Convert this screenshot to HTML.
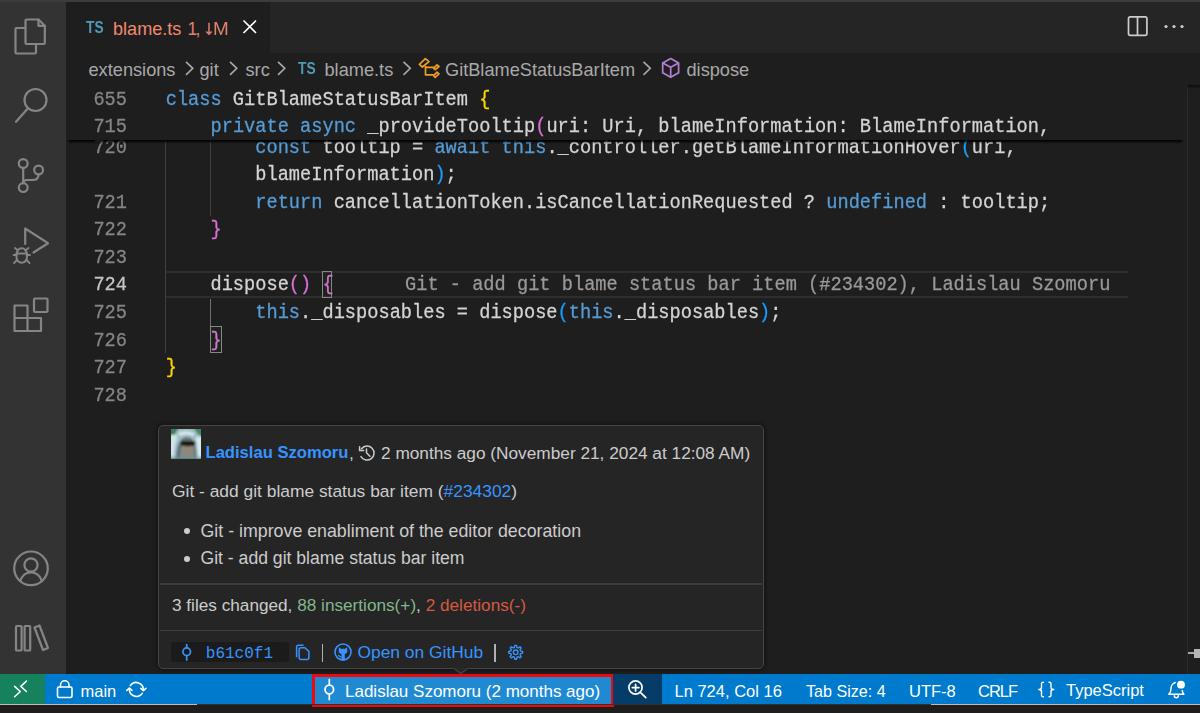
<!DOCTYPE html>
<html><head><meta charset="utf-8">
<style>
*{margin:0;padding:0;box-sizing:border-box}
html,body{width:1200px;height:713px;overflow:hidden;background:#1e1e1e;font-family:"Liberation Sans",sans-serif;position:relative}
.abs{position:absolute}
svg{position:absolute;overflow:visible}
.t{position:absolute;white-space:pre;line-height:1}
#topline{left:0;top:0;width:1200px;height:2px;background:#3c3c3c}
#act{left:0;top:2px;width:66px;height:672px;background:#333333}
#tabs{left:66px;top:2px;width:1134px;height:51px;background:#252526}
#tab{left:66px;top:2px;width:204px;height:51px;background:#1e1e1e}
.code{position:absolute;left:165.7px;font-family:"Liberation Mono",monospace;font-size:18.66px;white-space:pre;color:#d4d4d4;height:27.57px;line-height:27.57px;padding-top:1.7px;transform:scaleY(1.07);transform-origin:0 19.3px;-webkit-text-stroke:0.25px currentColor}
.ln{position:absolute;left:66px;width:61px;text-align:right;font-family:"Liberation Mono",monospace;font-size:18.66px;color:#858585;height:27.57px;line-height:27.57px;padding-top:1.7px;transform:scaleY(1.07);transform-origin:0 19.3px;-webkit-text-stroke:0.25px currentColor}
.k{color:#569cd6}
.b1{color:#ffd700}.b2{color:#da70d6}.b3{color:#179fff}
.guide{position:absolute;width:1.2px;background:#404040}
#status{left:0;top:674px;width:1200px;height:29.8px;background:#007acc}
.st{position:absolute;top:682.8px;color:#fff;font-size:16.5px;white-space:pre;line-height:1}
#tip{left:158px;top:424.8px;width:605.8px;height:244.2px;background:#252526;border:1.5px solid #454545;border-radius:5px;box-shadow:0 0 4px 1px rgba(0,0,0,0.45)}
.tt{position:absolute;color:#cccccc;font-size:17.4px;white-space:pre;line-height:1}
.lnk{color:#3794ff}
.bc{position:absolute;top:60.5px;color:#a9a9a9;font-size:18.2px;white-space:pre;line-height:1}
</style></head><body>
<div id="topline" class="abs"></div>
<div id="act" class="abs"></div>
<div id="tabs" class="abs"></div>
<div id="tab" class="abs"></div>

<!-- activity bar icons -->
<svg width="66" height="672" style="left:0;top:0" fill="none" stroke="#858585" stroke-width="2.2" stroke-linejoin="round" stroke-linecap="round">
  <!-- explorer -->
  <path d="M25.5 27.5 V20.5 a1 1 0 0 1 1 -1 H38.5 L44.8 25.8 V43 a1 1 0 0 1 -1 1 H26.5 a1 1 0 0 1 -1 -1 Z"/>
  <path d="M38.5 19.5 V25.8 H44.8"/>
  <path d="M25.5 28 H16.5 a1 1 0 0 0 -1 1 V52.5 a1 1 0 0 0 1 1 H35 a1 1 0 0 0 1 -1 V44"/>
  <!-- search -->
  <circle cx="35.5" cy="100" r="11"/>
  <path d="M28 108.2 L16 121.8"/>
  <!-- scm -->
  <circle cx="23.2" cy="163.5" r="4.4"/>
  <circle cx="38.6" cy="170" r="4.4"/>
  <circle cx="23.2" cy="187.6" r="4.4"/>
  <path d="M23.2 168 V183.2"/>
  <path d="M38.6 174.4 C38.6 178 36 180 32 180 H27 C25 180 23.2 181 23.2 183"/>
  <!-- run & debug -->
  <path d="M25.2 244 V228.5 L48 243.2 L33.5 252.5"/>
  <path d="M16.5 254.5 a5.2 6.2 0 0 1 10.4 0 v3 a5.2 5.2 0 0 1 -10.4 0 Z" stroke-width="2"/>
  <path d="M18 250.5 L15 248 M25.5 250.5 L28.5 248 M16.5 255 H13.5 M27 255 H30 M17 260 L14 263 M26.5 260 L29.5 263 M16.5 253.5 H27" stroke-width="1.8"/>
  <!-- extensions -->
  <path d="M14.5 305.5 H27.5 V318 H41 V331 H14.5 Z M14.5 318 H27.5 V331"/>
  <rect x="34" y="298.5" width="13.5" height="13.5" rx="1"/>
  <!-- accounts -->
  <circle cx="31" cy="568.3" r="16.8"/>
  <circle cx="31" cy="565" r="6.6"/>
  <path d="M20.3 581 C22 575.5 26 572.5 31 572.5 C36 572.5 40 575.5 41.7 581"/>
  <!-- library -->
  <rect x="16" y="626" width="5.6" height="24.5" rx="0.8"/>
  <rect x="24.6" y="626" width="5.6" height="24.5" rx="0.8"/>
  <path d="M34.5 627.5 L39.5 625.5 L48 648 L43 650 Z"/>
</svg>

<!-- tab -->
<div class="t" style="left:85.5px;top:19.6px;font-size:16.8px;font-weight:bold;color:#519aba;transform:scaleX(0.82);transform-origin:0 0">TS</div>
<div class="t" style="left:113px;top:20.2px;font-size:18.1px;color:#f48771">blame.ts</div>
<div class="t" style="left:187.5px;top:21px;font-size:17.5px;color:#e0806e">1</div>
<div class="t" style="left:195.5px;top:21px;font-size:17.5px;color:#e0806e">,</div>
<svg width="10" height="16" style="left:204.4px;top:20px" fill="none" stroke="#e0806e" stroke-width="1.5"><path d="M5 2.7 V13.8 M2.3 11.4 L5 14.2 L7.7 11.4"/></svg>
<div class="t" style="left:213.2px;top:21px;font-size:17.5px;color:#e0806e;transform:scaleX(1.08);transform-origin:0 0">M</div>
<svg width="20" height="20" style="left:240px;top:17px" stroke="#ffffff" stroke-width="1.6" fill="none"><path d="M3.5 3.5 L16 16 M16 3.5 L3.5 16"/></svg>
<!-- tab actions -->
<svg width="24" height="24" style="left:1125px;top:14px" stroke="#cccccc" stroke-width="1.7" fill="none"><rect x="3.5" y="2.8" width="18.4" height="18.6" rx="1.8"/><path d="M12.5 2.8 V21.4"/></svg>
<svg width="24" height="10" style="left:1163px;top:22px" fill="#cccccc"><circle cx="3" cy="4.5" r="1.6"/><circle cx="11" cy="4.5" r="1.6"/><circle cx="19" cy="4.5" r="1.6"/></svg>

<!-- breadcrumbs -->
<div class="bc" style="left:88.5px">extensions</div>
<div class="bc" style="left:199.5px">git</div>
<div class="bc" style="left:245.5px">src</div>
<div class="bc" style="left:324.5px">blame.ts</div>
<div class="bc" style="left:445px">GitBlameStatusBarItem</div>
<div class="bc" style="left:686.5px">dispose</div>
<svg width="1200" height="90" style="left:0;top:0" fill="none" stroke="#a9a9a9" stroke-width="1.6">
  <path d="M186 61.8 L192.8 68.3 L186 74.8"/>
  <path d="M230 61.8 L236.8 68.3 L230 74.8"/>
  <path d="M278 61.8 L284.8 68.3 L278 74.8"/>
  <path d="M403.5 61.8 L410.3 68.3 L403.5 74.8"/>
  <path d="M643.5 61.8 L650.3 68.3 L643.5 74.8"/>
</svg>
<div class="t" style="left:297.8px;top:61px;font-size:16.8px;font-weight:bold;color:#519aba;transform:scaleX(0.82);transform-origin:0 0">TS</div>
<!-- class icon -->
<svg width="30" height="28" style="left:414px;top:54px" fill="none" stroke="#ee9d28" stroke-width="1.7" stroke-linejoin="round">
  <path d="M11.4 4.6 L15 7.6 L8.4 13 L5.4 10.3 Z"/>
  <path d="M23 10.9 L25 12.5 L21.2 15.7 L19.6 14.1 Z"/>
  <path d="M23 18.2 L25 19.8 L21.2 23.3 L19.6 21.6 Z"/>
  <path d="M11.5 12 V20.8 H19.8 M11.5 13.3 H19.8"/>
</svg>
<!-- method cube icon -->
<svg width="30" height="28" style="left:656px;top:54px" fill="none" stroke="#b180d7" stroke-width="1.7" stroke-linejoin="round">
  <path d="M14.7 4.6 L22.6 9 V18.8 L14.7 23.3 L6.7 18.8 V9 Z"/>
  <path d="M6.7 9 L14.7 13.2 L22.6 9 M14.7 13.2 V23.3"/>
</svg>

<!-- code area -->
<div class="guide" style="left:165.2px;top:133px;height:219.5px"></div>
<div class="guide" style="left:210px;top:133px;height:83px"></div>
<div class="guide" style="left:209.8px;top:298.5px;height:27.5px;background:#707070"></div>

<!-- current line highlight -->
<div class="abs" style="left:166px;top:271px;width:962px;height:27px;border-top:2px solid #2e2e2e;border-bottom:2px solid #2e2e2e"></div>
<!-- bracket match boxes -->
<div class="abs" style="left:322px;top:270.8px;width:10px;height:27px;border:1.3px solid #888888;background:rgba(0,100,0,0.1)"></div>
<div class="abs" style="left:210px;top:326.2px;width:11.5px;height:27px;border:1.3px solid #888888;background:rgba(0,100,0,0.1)"></div>

<div class="ln" style="top:132.6px">720</div>
<div class="code" style="top:132.6px">        <span class="k">const</span> tooltip = <span class="k">await</span> <span class="k">this</span>._controller.getBlameInformationHover<span class="b3">(</span>uri,</div>
<div class="code" style="top:160.2px">        blameInformation<span class="b3">)</span>;</div>
<div class="ln" style="top:187.7px">721</div>
<div class="code" style="top:187.7px">        <span class="k">return</span> cancellationToken.isCancellationRequested ? <span class="k">undefined</span> : tooltip;</div>
<div class="ln" style="top:215.3px">722</div>
<div class="code" style="top:215.3px">    <span class="b2">}</span></div>
<div class="ln" style="top:242.9px">723</div>
<div class="ln" style="top:270.4px;color:#c6c6c6">724</div>
<div class="code" style="top:270.4px">    dispose<span class="b2">()</span> <span class="b2">{</span></div>
<div class="code" style="top:270.4px;left:405px;color:#999999">Git - add git blame status bar item (#234302), Ladislau Szomoru</div>
<div class="ln" style="top:298.0px">725</div>
<div class="code" style="top:298.0px">        <span class="k">this</span>._disposables = dispose<span class="b3">(</span><span class="k">this</span>._disposables<span class="b3">)</span>;</div>
<div class="ln" style="top:325.6px">726</div>
<div class="code" style="top:325.6px">    <span class="b2">}</span></div>
<div class="ln" style="top:353.1px">727</div>
<div class="code" style="top:353.1px"><span class="b1">}</span></div>
<div class="ln" style="top:380.7px">728</div>

<!-- scrollbar separator -->
<div class="abs" style="left:1187px;top:85px;width:1.2px;height:589px;background:#2b2b2b"></div>
<div class="abs" style="left:1187px;top:85px;width:13px;height:4px;background:linear-gradient(rgba(0,0,0,0.6),rgba(0,0,0,0))"></div>

<div class="abs" style="left:1188px;top:652px;width:6.5px;height:2.4px;background:#a6a6a6"></div>
<div class="abs" style="left:1194.2px;top:649px;width:6px;height:9.2px;background:#b4b4b4"></div>
<!-- sticky scroll -->
<div class="abs" style="left:69px;top:139px;width:1113px;height:3.2px;background:#000;filter:blur(1.1px)"></div>
<div class="abs" style="left:66px;top:84.5px;width:1121px;height:55.2px;background:#1e1e1e"></div>
<div class="ln" style="top:84.5px">655</div>
<div class="code" style="top:84.5px"><span class="k">class</span> GitBlameStatusBarItem <span class="b1">{</span></div>
<div class="ln" style="top:112.1px">715</div>
<div class="code" style="top:112.1px">    <span class="k">private</span> <span class="k">async</span> _provideTooltip<span class="b2">(</span>uri: Uri, blameInformation: BlameInformation,</div>

<!-- status bar -->
<div id="status" class="abs"></div>
<div class="abs" style="left:0;top:674px;width:45px;height:29.8px;background:#16825d"></div>
<div class="abs" style="left:312px;top:674px;width:301.5px;height:32.8px;border:3px solid #ee0a0a;background:#1f8ad2"></div>
<div class="abs" style="left:613px;top:674px;width:49px;height:29.8px;background:#053c68"></div>
<div class="abs" style="left:0;top:703.8px;width:197px;height:1.7px;background:#c8b8b0"></div>
<div class="abs" style="left:197px;top:703.8px;width:734px;height:1.7px;background:#3a2e28"></div>
<div class="abs" style="left:931px;top:703.8px;width:269px;height:1.7px;background:#c8b8b0"></div>

<svg width="1200" height="40" style="left:0;top:670px" fill="none" stroke="#ffffff" stroke-width="1.8" stroke-linecap="round" stroke-linejoin="round">
  <path d="M14.6 16.4 L20.3 21.5 L14.6 26.8" stroke-width="1.5"/>
  <path d="M26.4 11.1 L20.8 16.4 L26.4 21.5" stroke-width="1.5"/>
  <!-- lock -->
  <rect x="57.5" y="17" width="14.5" height="10.5" rx="1.5" stroke-width="1.6"/>
  <path d="M60.5 17 V15 a4.25 4.25 0 0 1 8.5 0 V17" stroke-width="1.6"/>
  <!-- sync -->
  <path d="M130.3 15.6 A7.2 7.2 0 0 1 143.4 20 M142.3 23.4 A7.2 7.2 0 0 1 129.3 18.8" stroke-width="1.6"/>
  <path d="M140.8 18.4 L143.4 20.6 L145.9 18.4 M126.8 20.4 L129.3 18.2 L131.9 20.4" stroke-width="1.6"/>
  <!-- commit -->
  <circle cx="329.3" cy="19.5" r="4.3" stroke-width="1.7"/>
  <path d="M329.3 9.6 V15.2 M329.3 23.8 V29.5" stroke-width="1.7"/>
  <!-- zoom -->
  <circle cx="635.5" cy="17.5" r="6.6" stroke-width="1.7"/>
  <path d="M640.3 22.3 L645.8 27.6 M635.6 14.3 V20.9 M632.3 17.6 H638.9" stroke-width="1.7"/>
  <!-- bell -->
  <path d="M1168.8 24.3 C1170.6 22.6 1171 20.8 1171 18.5 C1171 15.2 1173.2 12.8 1176.3 12.6 M1182 19.5 C1182.2 21.6 1182.6 22.8 1183.8 24.3 H1168.8 M1174.3 25.8 a2 2 0 0 0 4 0" stroke-width="1.5"/>
  <path d="M1043.5 12.3 C1041.3 12.3 1041.5 13.3 1041.5 15.5 V17.5 C1041.5 18.6 1040.6 19.4 1038.8 19.5 C1040.6 19.6 1041.5 20.4 1041.5 21.5 V23.8 C1041.5 26 1041.3 26.8 1043.5 26.8 M1049 12.3 C1051.2 12.3 1051 13.3 1051 15.5 V17.5 C1051 18.6 1051.9 19.4 1053.7 19.5 C1051.9 19.6 1051 20.4 1051 21.5 V23.8 C1051 26 1051.2 26.8 1049 26.8" stroke-width="1.4"/>
</svg>
<svg width="20" height="20" style="left:1173px;top:678px"><circle cx="8" cy="6.7" r="5.6" fill="#007acc"/><circle cx="8" cy="6.7" r="3.9" fill="#ffffff"/></svg>

<div class="st" style="left:80.5px">main</div>
<div class="st" style="left:345px;font-size:17px">Ladislau Szomoru (2 months ago)</div>
<div class="st" style="left:674.5px">Ln 724, Col 16</div>
<div class="st" style="left:806px;font-size:16.1px">Tab Size: 4</div>
<div class="st" style="left:909px">UTF-8</div>
<div class="st" style="left:978px;letter-spacing:-1px">CRLF</div>
<div class="st" style="left:1066px;top:682.3px">TypeScript</div>

<!-- tooltip -->
<div id="tip" class="abs"></div>
<svg width="14" height="8" style="left:453.5px;top:668px"><path d="M0 0.6 L6.8 5.6 L13.6 0.6" fill="#252526" stroke="#454545" stroke-width="1.3"/><rect x="0" y="-2" width="14" height="2.5" fill="#252526"/></svg>
<div class="abs" style="left:160px;top:583px;width:602px;height:1.5px;background:#3c3c3c"></div>
<div class="abs" style="left:160px;top:629.5px;width:602px;height:1.5px;background:#3c3c3c"></div>

<!-- avatar -->
<svg width="30" height="30" style="left:171px;top:429.3px">
  <defs><filter id="bl" x="-10%" y="-10%" width="120%" height="120%"><feGaussianBlur stdDeviation="0.9"/></filter><clipPath id="cp"><rect width="30" height="29.5"/></clipPath></defs>
  <g clip-path="url(#cp)">
  <rect width="30" height="30" fill="#9cbcc0"/>
  <g filter="url(#bl)">
  <path d="M-2 -2 H8 L3 6 H-2 Z" fill="#3f7a5c"/>
  <path d="M22 -2 H32 V8 L27 5 Z" fill="#4a8468"/>
  <path d="M-2 6 H6 V32 H-2 Z" fill="#cfe4e6"/>
  <path d="M25 8 H32 V32 H25 Z" fill="#d4ecee"/>
  <path d="M3 32 C2.5 15 6.5 2.5 15.5 2.5 C24.5 2.5 27.5 14 26.5 32 Z" fill="#a4bcc6"/>
  <path d="M5 32 C5 18 8.5 8 16 8 C23.5 8 26 18 25.5 32 Z" fill="#58707c"/>
  <path d="M9 32 C8.5 20 11 10.5 17 10.5 C23 10.5 24 19 23.5 32 Z" fill="#8c887c"/>
  <path d="M9.5 12.5 C14 11.5 20 11.5 24.5 12.5 L24 16.5 C20 17.5 14 17.5 10 16.5 Z" fill="#1c160c"/>
  <path d="M-2 27 H32 V32 H-2 Z" fill="#5d98a2" opacity="0.5"/>
  <path d="M7 4 C11 1.5 20 1.5 24 5 L22 7 C18 5 12.5 5 9 7 Z" fill="#d8eaee"/>
  </g></g>
</svg>
<div class="tt" style="left:205.5px;top:445px;font-size:16.6px;font-weight:bold;color:#3794ff">Ladislau Szomoru</div>
<div class="tt" style="left:349px;top:445px">,</div>
<svg width="20" height="20" style="left:357px;top:443px" fill="none" stroke="#cccccc" stroke-width="1.5" stroke-linecap="round">
  <path d="M4.6 5.7 A7 7 0 1 1 4 13.6"/>
  <path d="M2.6 3.8 V7.5 H6.6"/>
  <path d="M9.5 6 V9.7 L12.9 13.3"/>
</svg>
<div class="tt" style="left:381px;top:444.5px;font-size:17.25px">2 months ago (November 21, 2024 at 12:08 AM)</div>
<div class="tt" style="left:172px;top:483px">Git - add git blame status bar item (<span class="lnk">#234302</span>)</div>
<div class="abs" style="left:183.8px;top:528.3px;width:6px;height:6px;border-radius:3px;background:#cccccc"></div>
<div class="abs" style="left:183.8px;top:556.3px;width:6px;height:6px;border-radius:3px;background:#cccccc"></div>
<div class="tt" style="left:200.5px;top:523.1px;font-size:17.8px">Git - improve enabliment of the editor decoration</div>
<div class="tt" style="left:200.5px;top:550.2px;font-size:17.6px">Git - add git blame status bar item</div>
<div class="tt" style="left:172px;top:597px;font-size:17.2px">3 files changed, <span style="color:#81b88b">88 insertions(+)</span>, <span style="color:#d55a40">2 deletions(-)</span></div>

<div class="abs" style="left:171.3px;top:642px;width:117.4px;height:20px;border-radius:3px;background:#1b1b1b"></div>
<svg width="400" height="30" style="left:160px;top:638px" fill="none" stroke="#3794ff" stroke-width="1.7">
  <circle cx="26.7" cy="13.7" r="3.8"/>
  <path d="M26.7 6 V9.9 M26.7 17.5 V22.8"/>
  <!-- copy -->
  <path d="M136.6 19.2 V9.2 a2 2 0 0 1 2 -2 H143.5" stroke-width="1.5"/>
  <path d="M141.1 9.7 H144.8 L148.9 13.4 V19.4 a2 2 0 0 1 -2 2 H141.1 a2 2 0 0 1 -2 -2 V11.7 a2 2 0 0 1 2 -2 Z" stroke-width="1.5"/>
  <!-- gear -->
  <circle cx="355.66" cy="14.30" r="2.3" stroke-width="1.4"/>
  <path d="M354.30 9.49 L354.87 7.34 L356.45 7.34 L357.02 9.49 L358.10 9.93 L360.02 8.82 L361.14 9.94 L360.03 11.86 L360.47 12.94 L362.62 13.51 L362.62 15.09 L360.47 15.66 L360.03 16.74 L361.14 18.66 L360.02 19.78 L358.10 18.67 L357.02 19.11 L356.45 21.26 L354.87 21.26 L354.30 19.11 L353.22 18.67 L351.30 19.78 L350.18 18.66 L351.29 16.74 L350.85 15.66 L348.70 15.09 L348.70 13.51 L350.85 12.94 L351.29 11.86 L350.18 9.94 L351.30 8.82 L353.22 9.93 Z" stroke-width="1.4" stroke-linejoin="round"/>
</svg>
<!-- github -->
<svg width="20" height="20" style="left:333.3px;top:642.3px">
  <circle cx="10" cy="10" r="8" fill="none" stroke="#3794ff" stroke-width="1.6"/>
  <path d="M6 10.6 C5.5 9.8 5.4 8.8 5.8 7.9 C5.8 7 5.8 6.2 6.1 5.6 C6.8 5.8 7.6 6.3 8.2 6.9 C9.3 6.6 10.7 6.6 11.8 6.9 C12.4 6.3 13.2 5.8 13.9 5.6 C14.2 6.2 14.2 7 14.2 7.9 C14.6 8.8 14.5 9.8 14 10.6 C13.4 11.4 12.6 11.8 11.8 12 V18.4 H8.4 V12 C7.4 11.8 6.6 11.4 6 10.6 Z" fill="#3794ff"/>
  <path d="M5 13 C6 13.4 6.6 14.6 8.4 15" fill="none" stroke="#3794ff" stroke-width="1.1"/>
</svg>
<div class="abs" style="left:321.7px;top:644px;width:1.6px;height:17.5px;background:#b0b0b0"></div>
<div class="abs" style="left:494.2px;top:644px;width:1.6px;height:17.5px;background:#b0b0b0"></div>
<div class="tt" style="left:205.8px;top:646.3px;font-family:'Liberation Mono',monospace;font-size:16px;color:#3794ff">b61c0f1</div>
<div class="tt" style="left:357.5px;top:644px;font-size:17.4px;color:#3794ff">Open on GitHub</div>
</body></html>
